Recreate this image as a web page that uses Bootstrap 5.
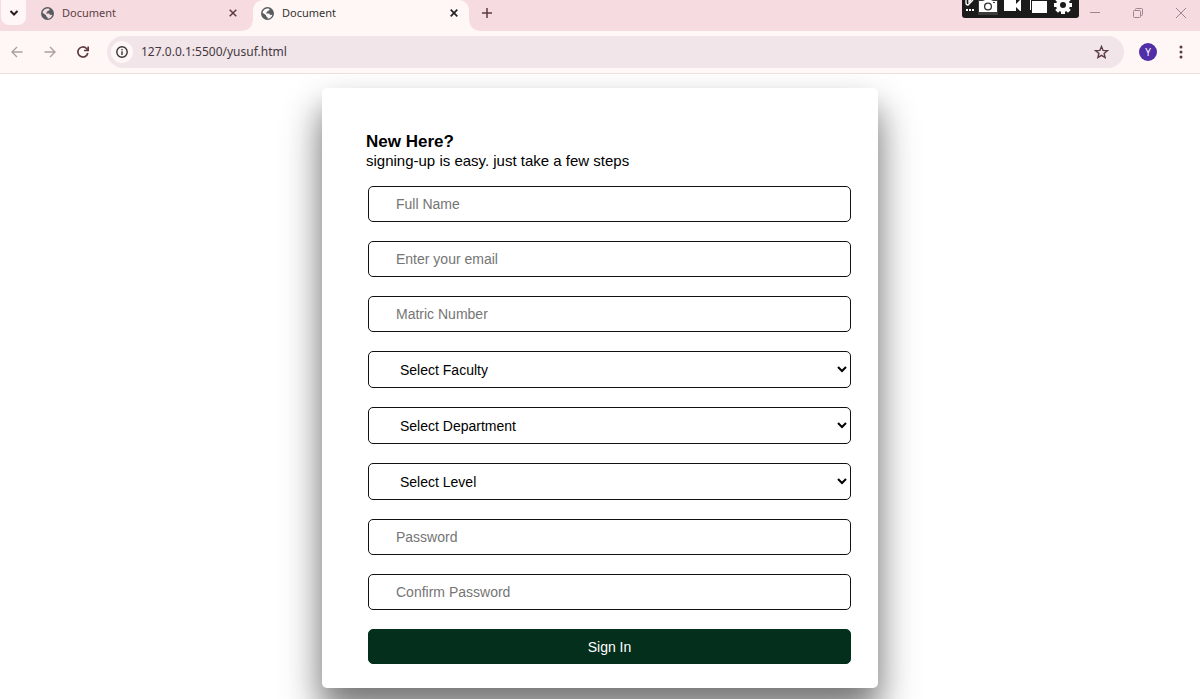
<!DOCTYPE html>
<html lang="en">
<head>
<meta charset="utf-8">
<meta name="viewport" content="width=device-width, initial-scale=1">
<title>Document</title>
<link rel="stylesheet" href="https://cdn.jsdelivr.net/npm/bootstrap@5.3.0/dist/css/bootstrap.min.css">
<style>
body{font-family:"Liberation Sans",Arial,sans-serif;color:#000;background:#fff;min-height:100vh}
svg{display:block;flex:none}
.chrome{font-family:"Noto Sans","Open Sans",sans-serif;position:relative;z-index:1}
.chrome button{border:0;padding:0;background:none;color:#5c3a42;display:flex;align-items:center;justify-content:center;flex:none}
.strip{background:#f6dbe0;height:31px}
.chrome .search-tabs{background:#fff7f7;width:25px;height:25px;border-radius:0 0 8px 8px;margin-left:1px;color:#2b1a1d;align-self:flex-start}
.tab{height:31px;padding:0 13px 5px 15px;font-size:11px;line-height:16px;color:#5c4046}
.tab a{color:inherit;text-decoration:none;gap:8px}
.tab-idle{width:227px}
.tab-live{width:216px;padding-left:8px;padding-right:8px;background:#fff7f5;border-radius:10px 10px 0 0;color:#333;position:relative}
.tab-live::before,.tab-live::after{content:"";position:absolute;bottom:0;width:10px;height:10px}
.tab-live::before{left:-10px;background:radial-gradient(circle at 0 0,#f6dbe0 9px,#fff7f5 10px)}
.tab-live::after{right:-10px;background:radial-gradient(circle at 100% 0,#f6dbe0 9px,#fff7f5 10px)}
.chrome .tab button{width:14px;height:16px}
.chrome .tab-live button{color:#222}
.chrome .new-tab{width:36px;height:25px}
.recorder{position:absolute;top:0;right:121px;width:117px;height:18px;background:#1b1b1b;border-radius:0 0 3px 3px;overflow:hidden}
.window-keys{margin-right:-2px}
.window-keys button{width:43px;height:25px;color:#9d858b}
.toolbar{background:#fff7f5;height:43px;border-bottom:1px solid #f0dfe0}
.toolbar .nav-key{width:33px;height:32px}
.chrome .dim{color:#aaa0a1}
.address{background:#f1e5ea;height:32px;border-radius:16px;margin-left:8px;padding:0 15px 0 4px}
.address .info{background:#fff7f7;border-radius:50%;width:22px;height:22px;color:#333}
.address input{border:0;background:none;outline:0;min-width:0;padding:0 8px;font-size:12px;line-height:20px;color:#45383d}
.chrome .avatar{width:18px;height:18px;border-radius:50%;background:#512da8;color:#fff;font-size:10px;margin-left:15px}
.chrome .menu-key{width:16px;height:24px;margin:0 11px 0 16px}
.stage{padding:14px 12px 11px}
.panel{max-width:556px;padding:44px 27px 24px 44px;border-radius:5px;background:#fff;box-shadow:0 25px 45px rgba(0,0,0,.3),0 20px 30px rgba(0,0,0,.35)}
.panel h1{font-size:17px;line-height:20px;font-weight:700;margin:0}
.panel p{font-size:15px;line-height:18px;margin:0 0 16px}
.fields{gap:19px;padding-left:2px}
.entry{width:100%;height:36px;border:1px solid #111;border-radius:5px;background:#fff;color:#000;font-size:14px;padding:0 27px}
.entry::placeholder{color:#757575}
select.entry{height:37px;padding-right:0}
.fields .submit{height:35px;padding:0;border:1px solid #022f1c;border-radius:5px;background:#032f1c;color:#fff;font-size:14px;line-height:20px}
</style>
</head>
<body class="d-flex flex-column">
<header class="chrome">
  <div class="strip d-flex">
    <button class="search-tabs" aria-label="Search tabs"><svg width="10" height="8" fill="none" stroke="currentColor" stroke-width="2"><path d="m1.500 2 3.500 3.500L8.500 2"/></svg></button>
    <div class="tab tab-idle d-flex align-items-center justify-content-between">
      <a href="#" class="d-flex align-items-center"><svg width="13" height="13" viewBox="0 0 14 14"><circle cx="7" cy="7" r="7" fill="#575c60"/><path fill="#f6dbe0" d="M5.500 2C7.500 1.200 9 1.600 9.200 2.800 9.300 4 8.200 4 7.200 4.300 6.500 4.600 7 5.600 6 5.800 5 6 5.600 7 6.500 7H8.500C9.500 7 9.300 8.400 10.200 8.600L12.200 8.300C11.500 11 9.500 12.500 7 12.500V11C5.500 11 5.600 9 4.800 8.400L1.600 6.300C1.900 4.300 3.500 2.500 5.500 2z"/></svg>Document</a>
      <button aria-label="Close tab"><svg width="8" height="8" stroke="currentColor" stroke-width="1.500"><path d="m.7.7 6.600 6.600m0-6.600L.7 7.300"/></svg></button>
    </div>
    <div class="tab tab-live d-flex align-items-center justify-content-between">
      <a href="#" class="d-flex align-items-center"><svg width="13" height="13" viewBox="0 0 14 14"><circle cx="7" cy="7" r="7" fill="#575c60"/><path fill="#fff7f5" d="M5.500 2C7.500 1.200 9 1.600 9.200 2.800 9.300 4 8.200 4 7.200 4.300 6.500 4.600 7 5.600 6 5.800 5 6 5.600 7 6.500 7H8.500C9.500 7 9.300 8.400 10.200 8.600L12.200 8.300C11.500 11 9.500 12.500 7 12.500V11C5.500 11 5.600 9 4.800 8.400L1.600 6.300C1.900 4.300 3.500 2.500 5.500 2z"/></svg>Document</a>
      <button aria-label="Close tab"><svg width="8" height="8" stroke="currentColor" stroke-width="1.700"><path d="m.7.7 6.600 6.600m0-6.600L.7 7.300"/></svg></button>
    </div>
    <button class="new-tab" aria-label="New tab"><svg width="10" height="10" stroke="currentColor" stroke-width="1.500"><path d="M5 0v10M0 5h10"/></svg></button>
    <div class="window-keys d-flex ms-auto">
      <button aria-label="Minimise"><svg width="10" height="10" stroke="currentColor"><path d="M0 4.500h10"/></svg></button>
      <button aria-label="Restore"><svg width="10" height="10" fill="none" stroke="currentColor"><rect x=".5" y="2.500" width="7" height="7" rx="1"/><path d="M2.500 2.500v-1q0-1 1-1h5q1 0 1 1v5q0 1-1 1h-1"/></svg></button>
      <button aria-label="Close"><svg width="10" height="10" stroke="currentColor"><path d="m0 0 10 10M10 0 0 10"/></svg></button>
    </div>
  </div>
  <div class="toolbar d-flex align-items-center">
    <button class="nav-key dim" aria-label="Back"><svg width="12" height="12" fill="none" stroke="currentColor" stroke-width="1.400"><path d="M11.500 6H1m5-5L1 6l5 5"/></svg></button>
    <button class="nav-key dim" aria-label="Forward"><svg width="12" height="12" fill="none" stroke="currentColor" stroke-width="1.400"><path d="M.5 6H11M6 1l5 5-5 5"/></svg></button>
    <button class="nav-key" aria-label="Reload"><svg width="12" height="12" fill="none" stroke="currentColor" stroke-width="1.700"><path d="M10.800 7A5 5 0 1 1 9.500 2.500l1.300 1.500"/><path d="M11.200.5v4H7"/></svg></button>
    <div class="address d-flex align-items-center flex-grow-1">
      <button class="info" aria-label="Site information"><svg width="12" height="12" fill="none" stroke="currentColor" stroke-width="1.400"><circle cx="6" cy="6" r="5.200"/><path d="M6 5.300V9M6 3v1.300"/></svg></button>
      <input class="flex-grow-1" type="text" aria-label="Address" value="127.0.0.1:5500/yusuf.html">
      <button aria-label="Bookmark"><svg width="15" height="14" viewBox="0 0 15 14" fill="none" stroke="currentColor" stroke-width="1.400"><path d="m7.500 1.500 1.600 3.900 4.200.3-3.200 2.700 1 4.100-3.600-2.200-3.600 2.200 1-4.100L1.700 5.700l4.200-.3z"/></svg></button>
    </div>
    <button class="avatar">Y</button>
    <button class="menu-key" aria-label="Menu"><svg width="4" height="14" fill="currentColor"><circle cx="2" cy="2" r="1.500"/><circle cx="2" cy="7" r="1.500"/><circle cx="2" cy="12" r="1.500"/></svg></button>
  </div>
  <div class="recorder">
    <svg width="117" height="18" fill="#fff">
      <path d="M16 0h20v15H16z" fill="#3b3b3b"/>
      <path d="M4 9h2v2H4zm3 0h2v2H7zm3 0h2v2h-2z"/>
      <path d="M4 0v3q0 2 2 2l5-5M7 0v2l2-2" fill="none" stroke="#fff" stroke-width="1.300"/>
      <path d="M17 1h4l2-1h6l2 1h4v11H17z"/><circle cx="26" cy="6.500" r="3.400" fill="none" stroke="#333" stroke-width="1.300"/><path d="M31 2h2v1h-2z" fill="#333"/>
      <path d="M42 0h12v4l4-4h1v11h-1l-4-4v4H42z"/>
      <path d="M68 0v10h1V0zM70 1h15v12H70z"/>
      <g transform="translate(101 5)"><circle r="5" fill="none" stroke="#fff" stroke-width="4"/><path id="tooth" d="M-2-9h4v18h-4zM-9-2h18v4H-9z"/><path d="M-2-9h4v18h-4zM-9-2h18v4H-9z" transform="rotate(45)"/><circle r="3" fill="#1b1b1b"/></g>
    </svg>
  </div>
</header>
<main class="stage flex-grow-1">
  <section class="panel mx-auto">
    <h1>New Here?</h1>
    <p>signing-up is easy. just take a few steps</p>
    <form class="fields d-flex flex-column">
      <input class="entry" type="text" aria-label="Full Name" placeholder="Full Name">
      <input class="entry" type="email" aria-label="Email" placeholder="Enter your email">
      <input class="entry" type="text" aria-label="Matric Number" placeholder="Matric Number">
      <select class="entry" aria-label="Faculty"><option>Select Faculty</option></select>
      <select class="entry" aria-label="Department"><option>Select Department</option></select>
      <select class="entry" aria-label="Level"><option>Select Level</option></select>
      <input class="entry" type="password" aria-label="Password" placeholder="Password">
      <input class="entry" type="password" aria-label="Confirm Password" placeholder="Confirm Password">
      <button class="btn submit" type="submit">Sign In</button>
    </form>
  </section>
</main>
<script src="https://cdn.jsdelivr.net/npm/bootstrap@5.3.0/dist/js/bootstrap.bundle.min.js"></script>
</body>
</html>
